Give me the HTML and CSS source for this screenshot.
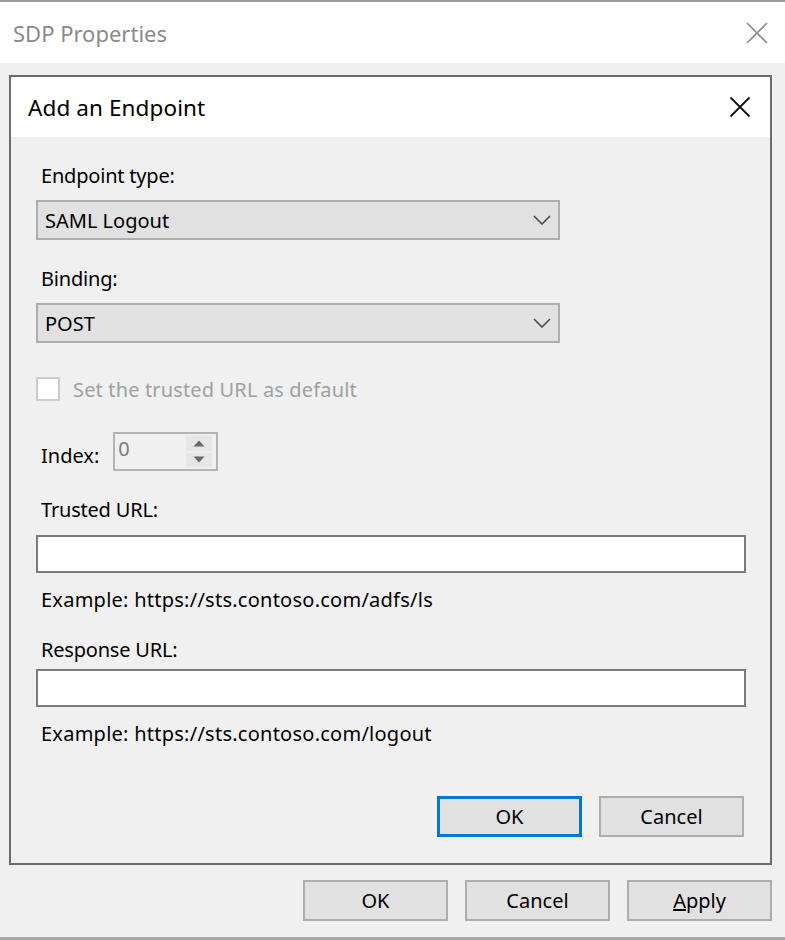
FILE: index.html
```html
<!DOCTYPE html>
<html>
<head>
<meta charset="utf-8">
<title>SDP Properties</title>
<link rel="stylesheet" href="styles.css">
</head>
<body>
<div class="window">
  <div class="titlebar">
    <span class="title">SDP Properties</span>
    <svg class="close outer-close" width="22" height="22" viewBox="0 0 22 22"><path d="M1 1 L21 21 M21 1 L1 21" stroke="#8c8c8c" stroke-width="1.6" fill="none"/></svg>
  </div>
  <div class="window-body">
    <div class="dialog">
      <div class="dialog-title">
        <span class="dtitle">Add an Endpoint</span>
        <svg class="close" width="22" height="22" viewBox="0 0 22 22"><path d="M1.5 1.5 L20.5 20.5 M20.5 1.5 L1.5 20.5" stroke="#111" stroke-width="1.8" fill="none"/></svg>
      </div>
      <div class="dialog-body">
        <div class="label">Endpoint type:</div>
        <div class="select">
          <span>SAML Logout</span>
          <svg width="18" height="10" viewBox="0 0 18 10"><path d="M1 1 L9 9 L17 1" stroke="#4a4a4a" stroke-width="1.6" fill="none"/></svg>
        </div>
        <div class="label gap-l">Binding:</div>
        <div class="select">
          <span>POST</span>
          <svg width="18" height="10" viewBox="0 0 18 10"><path d="M1 1 L9 9 L17 1" stroke="#4a4a4a" stroke-width="1.6" fill="none"/></svg>
        </div>
        <div class="check-row">
          <span class="checkbox"></span>
          <span class="check-label">Set the trusted URL as default</span>
        </div>
        <div class="index-row">
          <span class="index-label">Index:</span>
          <div class="spinner">
            <span class="spin-val">0</span>
            <div class="spin-btns">
              <span class="spin-btn"><svg width="12" height="7" viewBox="0 0 12 7"><path d="M6 0.5 L11.5 6.5 L0.5 6.5 Z" fill="#6a6a6a"/></svg></span>
              <span class="spin-btn"><svg width="12" height="7" viewBox="0 0 12 7"><path d="M0.5 0.5 L11.5 0.5 L6 6.5 Z" fill="#6a6a6a"/></svg></span>
            </div>
          </div>
        </div>
        <div class="label gap-t">Trusted URL:</div>
        <div class="input"></div>
        <div class="example">Example: https://sts.contoso.com/adfs/ls</div>
        <div class="label gap-r">Response URL:</div>
        <div class="input input-r"></div>
        <div class="example">Example: https://sts.contoso.com/logout</div>
        <div class="dialog-buttons">
          <span class="btn btn-default">OK</span>
          <span class="btn">Cancel</span>
        </div>
      </div>
    </div>
    <div class="window-buttons">
      <span class="btn">OK</span>
      <span class="btn">Cancel</span>
      <span class="btn"><u>A</u>pply</span>
    </div>
  </div>
</div>
</body>
</html>
```

FILE: styles.css
```css
html, body {
  margin: 0;
  padding: 0;
}
body {
  background: #f0f0f0;
  font-family: "Noto Sans", "Open Sans", sans-serif;
  font-size: 20px;
  color: #000;
  width: 785px;
  height: 940px;
  overflow: hidden;
}
.window {
  height: 935px;
  border-top: 2px solid #9c9c9c;
  border-bottom: 3px solid #a8a8a8;
  display: flex;
  flex-direction: column;
}
.titlebar {
  height: 61px;
  background: #fff;
  display: flex;
  align-items: center;
  justify-content: space-between;
  padding: 0 17px 0 13px;
}
.title {
  color: #8a8a8a;
  font-size: 22px;
  letter-spacing: 0;
}
.window-body {
  flex: 1;
  padding: 12px 13px 0 9px;
}
.dialog {
  border: 2px solid #6c6c6c;
  height: 786px;
  display: flex;
  flex-direction: column;
  background: #f0f0f0;
}
.dialog-title {
  height: 60px;
  background: #fff;
  display: flex;
  align-items: center;
  justify-content: space-between;
  padding: 0 19px 0 17px;
}
.dtitle {
  font-size: 22.5px;
  letter-spacing: 0.1px;
}
.dialog-body {
  padding: 27px 0 0 25px;
  flex: 1;
  display: flex;
  flex-direction: column;
}
.label {
  line-height: 24px;
  height: 24px;
  padding-left: 5px;
  letter-spacing: -0.2px;
}
.select {
  margin-top: 12px;
  height: 36px;
  border: 2px solid #adadad;
  background: #e1e1e1;
  display: flex;
  align-items: center;
  justify-content: space-between;
  padding: 0 7px 0 7px;
  box-sizing: content-box;
  width: 506px;
}
.gap-l { margin-top: 27px; }
.check-row {
  margin-top: 34px;
  display: flex;
  align-items: center;
  height: 24px;
}
.checkbox {
  width: 20px;
  height: 20px;
  border: 2px solid #cccccc;
  background: #fff;
}
.check-label {
  margin-left: 13px;
  color: #a0a0a0;
  letter-spacing: 0.15px;
}
.index-row {
  margin-top: 31px;
  display: flex;
  align-items: flex-end;
  height: 39px;
}
.index-label {
  padding-left: 5px;
  line-height: 24px;
  margin-bottom: 3px;
}
.spinner {
  margin-left: 14px;
  width: 101px;
  height: 35px;
  border: 2px solid #b4b4b4;
  display: flex;
  justify-content: space-between;
  background: #f0f0f0;
}
.spin-val {
  color: #7a7a7a;
  padding-left: 3px;
  line-height: 30px;
}
.spin-btns {
  display: flex;
  flex-direction: column;
  gap: 2px;
  padding: 2px 4px 2px 0;
}
.spin-btn {
  width: 26px;
  flex: 1;
  background: #e6e6e6;
  display: flex;
  align-items: center;
  justify-content: center;
}
.gap-t { margin-top: 27px; }
.gap-r { margin-top: 26px; }
.input {
  margin-top: 13px;
  width: 706px;
  height: 34px;
  border: 2px solid #7a7a7a;
  background: #fff;
}
.input-r { margin-top: 7px; }
.example {
  margin-top: 15px;
  line-height: 24px;
  height: 24px;
  padding-left: 5px;
  letter-spacing: 0.25px;
}
.dialog-buttons {
  margin-top: 50px;
  display: flex;
  justify-content: flex-end;
  gap: 17px;
  padding-right: 26px;
}
.btn {
  width: 141px;
  height: 37px;
  border: 2px solid #adadad;
  background: #e1e1e1;
  display: flex;
  align-items: center;
  justify-content: center;
}
.btn-default {
  border: 2px solid #0078d7;
  box-shadow: inset 0 0 0 1px #0078d7;
}
.window-buttons {
  margin-top: 15px;
  display: flex;
  justify-content: flex-end;
  gap: 17px;
}
```
